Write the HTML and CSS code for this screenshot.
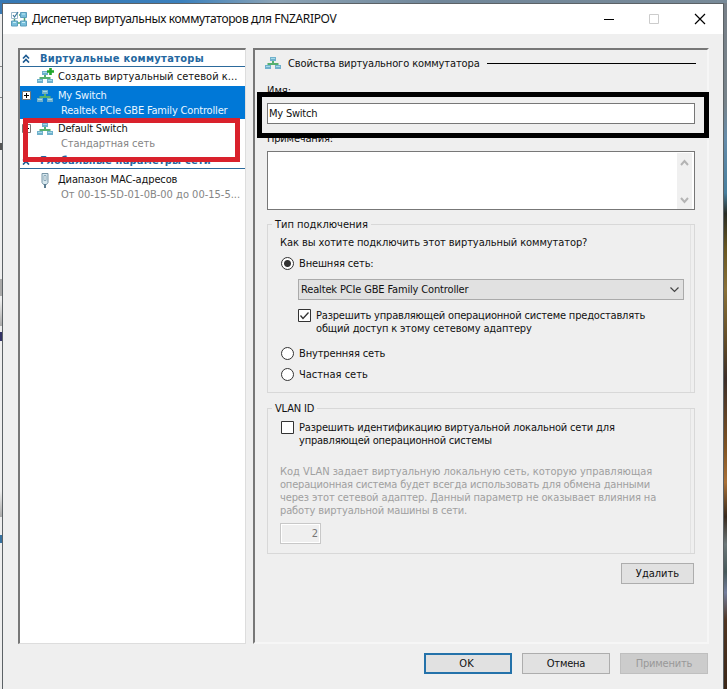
FILE: index.html
```
<!DOCTYPE html>
<html lang="ru">
<head>
<meta charset="utf-8">
<title>Диспетчер виртуальных коммутаторов</title>
<link rel="stylesheet" href="styles.css">
</head>
<body>
<svg class="defs" width="0" height="0">
  <symbol id="switch" viewBox="0 0 16 14">
    <path d="M8 5v4M3.500 10V8h9v2" fill="none" stroke="#55b06f" stroke-width="2"/>
    <path d="M5 1h6v4H5zM0 9h6v4H0zM10 9h6v4h-6z" fill="#6fb0cc"/>
    <path d="M6 2.500h4M1 10.500h4M11 10.500h4" stroke="#a5dbe8"/>
  </symbol>
  <symbol id="plusbox" viewBox="0 0 9 9">
    <path d="M.5.5h8v8h-8z" fill="#fff" stroke="#777"/><path d="M2 4.500h5M4.500 2v5" stroke="#000"/>
  </symbol>
  <symbol id="chevrons" viewBox="0 0 8 9">
    <path d="M1 4.500 4 1.500l3 3M1 8.500l3-3 3 3" fill="none" stroke="#1c5a91" stroke-width="1.700"/>
  </symbol>
</svg>
<div class="desktop">
  <div class="behind">
    <i class="edge e1"></i><i class="edge e2"></i><i class="edge g1"></i><i class="edge e3"></i><i class="edge e4"></i><i class="edge g2"></i><i class="edge e5"></i><i class="edge g3"></i>
  </div>
  <main class="window">
    <header class="titlebar">
      <svg class="app-icon" viewBox="0 0 17 16">
        <path d="M8 4h3M7 12h3M3.500 7v3M13.500 6v4" stroke="#4aa56c" stroke-width="1.500"/>
        <path d="M.5 1.500h6v6h-6z" fill="#fff" stroke="#9bb9ca"/><path d="m2 4 1.500 2L7 1" fill="none" stroke="#3a789c" stroke-width="1.200"/>
        <path d="M9.500 1.500h6v5h-6zM.5 10h6v5h-6zM9.500 10h6v5h-6z" fill="#79bfdc" stroke="#5b9dbc"/>
        <path d="M11 3h3M2 11.500h3M11 11.500h3" stroke="#c5edf5"/>
      </svg>
      <h1>Диспетчер виртуальных коммутаторов для FNZARIPOV</h1>
      <svg class="controls" viewBox="0 0 104 12">
        <path d="M1 6.500h10" stroke="#000"/><path d="M46.500 1.500h9v9h-9z" fill="none" stroke="#ccc"/><path d="m92 1 10 10M102 1 92 11" stroke="#000" stroke-width="1.200"/>
      </svg>
    </header>
    <div class="panels">
      <nav class="tree">
        <h2 class="section"><svg><use href="#chevrons"/></svg><span class="t-virt">Виртуальные коммутаторы</span></h2>
        <div class="item create"><span class="expander"></span>
          <span class="icon"><svg class="sw"><use href="#switch"/></svg><svg class="add" viewBox="0 0 7 7"><path d="M3.500 0v7M0 3.500h7" stroke="#20a52b" stroke-width="2.600"/></svg></span>
          <span class="t-create">Создать виртуальный сетевой к...</span></div>
        <div class="pair selected">
          <div class="item"><svg class="expander"><use href="#plusbox"/></svg><span class="icon"><svg class="sw"><use href="#switch"/></svg></span><span class="t-my">My Switch</span></div>
          <div class="sub t-realtek">Realtek PCIe GBE Family Controller</div>
        </div>
        <div class="pair">
          <div class="item"><svg class="expander"><use href="#plusbox"/></svg><span class="icon"><svg class="sw"><use href="#switch"/></svg></span><span class="t-default">Default Switch</span></div>
          <div class="sub t-std">Стандартная сеть</div>
        </div>
        <h2 class="section global"><svg><use href="#chevrons"/></svg><span class="t-glob">Глобальные параметры сети</span></h2>
        <div class="pair mac">
          <div class="item"><span class="expander"></span><span class="icon"><svg class="plug" viewBox="0 0 10 16"><path d="M2 1.500h6v9l-1.500 2h-3L2 10.500z" fill="#d7e8ef" stroke="#7895a6"/><path d="M4 3.500h2v5H4z" fill="#fff" stroke="#8ba9b8"/><path d="M5 12v4" stroke="#5d7d91" stroke-width="2"/></svg></span><span class="t-mac">Диапазон MAC-адресов</span></div>
          <div class="sub t-range">От 00-15-5D-01-0B-00 до 00-15-5...</div>
        </div>
        <div class="mark red"></div>
      </nav>
      <section class="props">
        <h2 class="heading"><svg class="sw"><use href="#switch"/></svg><span class="t-head">Свойства виртуального коммутатора</span><i></i></h2>
        <div class="label name"><span class="t-name">Имя:</span></div>
        <div class="field"><span class="t-field">My Switch</span></div>
        <div class="label notes"><span class="t-notes">Примечания:</span></div>
        <div class="area"><svg viewBox="0 0 15 56"><path d="M0 0h15v56H0z" fill="#f0f0f0"/><path d="m4 12 3.500-4 3.500 4M4 45l3.500 4 3.500-4" fill="none" stroke="#b4b4b4" stroke-width="2"/></svg></div>
        <fieldset class="group conn">
          <legend class="t-type">Тип подключения</legend>
          <p class="t-how">Как вы хотите подключить этот виртуальный коммутатор?</p>
          <div class="option ext"><b class="radio on"></b><span class="t-ext">Внешняя сеть:</span></div>
          <div class="combo"><span class="t-combo">Realtek PCIe GBE Family Controller</span><svg viewBox="0 0 9 6"><path d="m.5.500 4 4 4-4" fill="none" stroke="#444" stroke-width="1.200"/></svg></div>
          <div class="option allow"><svg class="check" viewBox="0 0 13 13"><path d="M.5.500h12v12H.5z" fill="#fff" stroke="#333"/><path d="m2.500 6.500 2.500 3 5.500-6" fill="none" stroke="#333" stroke-width="1.300"/></svg><span><span class="t-allow1">Разрешить управляющей операционной системе предоставлять</span><br><span class="t-allow2">общий доступ к этому сетевому адаптеру</span></span></div>
          <div class="option int"><b class="radio"></b><span class="t-int">Внутренняя сеть</span></div>
          <div class="option priv"><b class="radio"></b><span class="t-priv">Частная сеть</span></div>
        </fieldset>
        <fieldset class="group vlan">
          <legend class="t-vlan">VLAN ID</legend>
          <div class="option ident"><svg class="check" viewBox="0 0 13 13"><path d="M.5.500h12v12H.5z" fill="#fff" stroke="#333"/></svg><span><span class="t-id1">Разрешить идентификацию виртуальной локальной сети для</span><br><span class="t-id2">управляющей операционной системы</span></span></div>
          <p class="hint"><span class="t-h1">Код VLAN задает виртуальную локальную сеть, которую управляющая</span><br><span class="t-h2">операционная система будет всегда использовать для обмена данными</span><br><span class="t-h3">через этот сетевой адаптер. Данный параметр не оказывает влияния на</span><br><span class="t-h4">работу виртуальной машины в сети.</span></p>
          <div class="number">2</div>
        </fieldset>
        <div class="button delete"><span class="t-del">Удалить</span></div>
        <div class="mark black"></div>
      </section>
    </div>
    <footer><div class="button ok">OK</div><div class="button"><span class="t-cancel">Отмена</span></div><div class="button disabled"><span class="t-apply">Применить</span></div></footer>
  </main>
</div>
</body>
</html>
```
FILE: styles.css
```
* { box-sizing: border-box; }
body { margin: 0; width: 727px; height: 689px; overflow: hidden; font: 11px/13px "DejaVu Sans Condensed", "DejaVu Sans", sans-serif; font-stretch: condensed; color: #111; white-space: nowrap; }
h1, h2, p { margin: 0; font: inherit; }
svg { display: block; flex: none; }
.defs { position: absolute; }
.desktop { display: flex; height: 689px; padding-top: 3px; background: linear-gradient(90deg, #3678b4, #3a80bd 25%, #8ba3b5 38%, #71879a 60%, #788a98) top / 100% 3px no-repeat, linear-gradient(#788088, #77838a 15%, #668caa 20%, #477f9e 28%, #292c24 31%, #685620 36%, #8a7138 42%, #5f4926 50%, #3c2e29 55%, #805322 65%, #aa7137 70%, #38291c 75%, #6c7779 79%, #465859 83%, #737e9c 86%, #503522 90%, #3b2718); }
.behind { width: 2px; overflow: hidden; display: flex; flex-direction: column; background: linear-gradient(#3a79b3 11px, #eee 11px); }
.edge { height: 1px; flex: none; background: #888; }
.e1 { margin-top: 63px; }
.e2 { margin-top: 30px; }
.e3 { margin-top: 129px; height: 17px; background: #aaa; }
.e4 { margin-top: 4px; height: 26px; background: linear-gradient(#eee, #aaa); }
.e5 { margin-top: 150px; height: 26px; background: linear-gradient(#eee, #aaa); }
.g1 { margin-top: 45px; height: 7px; background: #555; }
.g2 { margin-top: 6px; height: 9px; background: #336; }
.g3 { margin-top: 18px; height: 8px; background: #37719f; }
.window { width: 722px; height: 686px; flex: none; border: 1px solid #5c6266; border-bottom: 0; background: #efefef; }
.titlebar { height: 30px; background: #fff; display: flex; align-items: center; padding-left: 8px; }
.app-icon { width: 17px; height: 16px; margin-right: 4px; }
h1 { font: 12px/16px "Noto Sans", sans-serif; width: 571px; letter-spacing: -.35px; }
.controls { width: 104px; height: 12px; margin-top: -1px; }
.panels { display: flex; gap: 7px; padding: 14px 0 0 15px; }
.tree { position: relative; width: 228px; height: 596px; border: solid; border-width: 2px 1px 1px 2px; border-color: #777 #ddd #ddd #777; background: #fff; }
.section { height: 17px; border-bottom: 1px solid #2c6a9c; display: flex; align-items: center; font-weight: bold; color: #24679f; }
.section svg { width: 8px; height: 9px; margin: 0 10px 0 2px; }
.item { height: 15px; display: flex; align-items: center; }
.create { height: 19px; }
.expander { width: 9px; height: 9px; margin: 0 6px 0 2px; flex: none; }
.icon { position: relative; width: 17px; margin-right: 4px; flex: none; }
.sw { width: 16px; height: 14px; }
.icon .sw { height: 14px; }
.add { position: absolute; width: 7px; height: 7px; left: 10px; top: -2px; }
.plug { width: 10px; height: 16px; margin-left: 3px; }
.pair { height: 33px; padding-top: 2px; }
.selected { background: #0078d7; color: #e9f6ff; }
.sub { height: 15px; line-height: 15px; padding-left: 41px; color: #858585; }
.selected .sub { color: inherit; }
.mac { padding-top: 3px; }
.mark { position: absolute; border: 5px solid; }
.red { left: 3px; top: 68px; width: 217px; height: 44px; border-color: #d9212c; }
.black { left: 2px; top: 42px; width: 452px; height: 46px; border-color: #000; }
.props { position: relative; width: 456px; height: 596px; border: 2px solid; border-color: #777 #f6f6f6 #f6f6f6 #777; padding: 5px 11px 0 12px; }
.heading { height: 16px; display: flex; align-items: center; margin-left: -2px; }
.heading span { margin-left: 7px; width: 199px; }
.heading i { flex: 1; height: 1px; background: #000; }
.label { height: 13px; }
.name { margin-top: 13px; }
.field { margin-top: 6px; height: 21px; width: 428px; border: 1px solid #777; background: #fff; padding: 3px 1px; }
.notes { margin-top: 8px; }
.area { margin-top: 6px; height: 59px; width: 428px; border: 1px solid #777; background: #fff; display: flex; justify-content: flex-end; padding: 1px 2px; }
.area svg { width: 15px; height: 56px; }
.group { margin: 0; padding: 0 0 0 12px; border: 1px solid #d8d8d8; width: 428px; min-width: 0; background: linear-gradient(#e2e2e2, #e2e2e2) 422px 0 / 1px 100% no-repeat; }
legend { padding: 0 3px; margin-left: -8px; height: 13px; }
.conn { margin-top: 8px; height: 175px; }
.conn p { margin-top: 5px; }
.option { display: flex; gap: 5px; margin-left: 1px; }
.ext { margin-top: 8px; }
.radio { width: 13px; height: 13px; border: 1px solid #333; border-radius: 50%; background: #fff; flex: none; }
.on { background: radial-gradient(circle, #333 3px, #fff 4px); }
.combo { width: 386px; height: 21px; margin: 9px 0 0 18px; border: 1px solid #aaa; background: #e1e1e1; display: flex; align-items: center; justify-content: space-between; padding: 0 4px 0 2px; }
.combo svg { width: 9px; height: 6px; }
.allow { margin: 9px 0 0 18px; }
.check { width: 13px; height: 13px; }
.int { margin-top: 12px; }
.priv { margin-top: 8px; }
.vlan { margin-top: 9px; height: 152px; }
.ident { margin-top: 6px; }
.hint { margin-top: 18px; color: #a0a0a0; }
.number { width: 41px; height: 21px; margin-top: 6px; border: 1px solid #c8c8c8; box-shadow: inset 0 0 0 1px #fff; padding: 3px 2px; text-align: right; color: #777; }
.button { width: 88px; height: 21px; border: 1px solid #adadad; background: #e1e1e1; line-height: 20px; text-align: center; }
.delete { width: 73px; margin: 9px 0 0 354px; }
footer { display: flex; gap: 10px; padding: 9px 0 0 421px; }
.ok { border: 2px solid #2472aa; line-height: 18px; padding-right: 3px; }
.disabled { border-color: #bfbfbf; background: #ccc; color: #999; }

/* Tracking that brings each caption to the dialog font's width */
.t-virt { letter-spacing: .3px; }
.t-glob { letter-spacing: .2px; }
.t-create { letter-spacing: .03px; }
.t-my, .t-realtek, .t-default { letter-spacing: -.18px; }
.t-std { letter-spacing: -.06px; }
.t-mac { letter-spacing: -.13px; }
.t-head { letter-spacing: -.12px; }
.t-field { letter-spacing: -.22px; }
.t-notes { letter-spacing: -.18px; }
.t-how { letter-spacing: -.08px; }
.t-ext, .t-int, .t-allow2 { letter-spacing: -.14px; }
.t-combo { letter-spacing: -.15px; }
.t-allow1 { letter-spacing: -.18px; }
.t-vlan { letter-spacing: -.15px; }
.t-id1 { letter-spacing: -.165px; }
.t-id2 { letter-spacing: -.2px; }
.t-h1 { letter-spacing: -.03px; }
.t-h2 { letter-spacing: -.19px; }
.t-h3 { letter-spacing: -.12px; }
.t-h4 { letter-spacing: -.15px; }
.t-cancel, .t-apply { letter-spacing: -.2px; }
```
